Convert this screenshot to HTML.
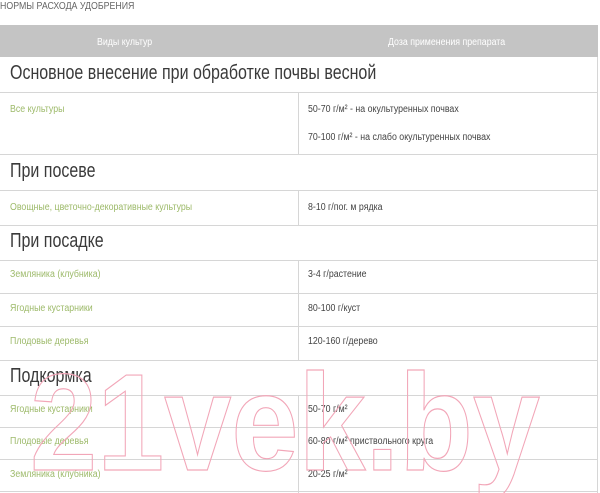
<!DOCTYPE html>
<html><head><meta charset="utf-8"><style>
*{margin:0;padding:0;box-sizing:border-box}
body{width:600px;height:493px;background:#fff;position:relative;overflow:hidden;font-family:"Liberation Sans",sans-serif}
.a{position:absolute;white-space:nowrap}
.t{display:inline-block;transform-origin:left center;transform:scaleX(.88)}
.sec .t{transform:scaleX(.8)}
.h{position:absolute;left:0;width:598px;height:1px;background:#d6d6d6}
.v{position:absolute;left:298px;width:1px;background:#d6d6d6}
.sec{font-size:20px;color:#3a3a3a;left:10px}
.g{font-size:10px;color:#9dba6a;left:10px}
.d{font-size:10px;color:#444;left:308px}
</style></head><body>
<div class="a" style="left:0;top:1px;font-size:10px;color:#666"><span class="t">НОРМЫ РАСХОДА УДОБРЕНИЯ</span></div>
<div style="position:absolute;left:0;top:25px;width:598px;height:32px;background:#c4c4c4"></div>
<div class="a" style="left:97px;top:37px;font-size:10px;color:#fff"><span class="t">Виды культур</span></div>
<div class="a" style="left:388px;top:37px;font-size:10px;color:#fff"><span class="t">Доза применения препарата</span></div>
<div style="position:absolute;left:597px;top:57px;width:1px;height:436px;background:#d6d6d6"></div>

<div class="a sec" style="top:62px"><span class="t">Основное внесение при обработке почвы весной</span></div>
<div class="h" style="top:92px"></div>
<div class="v" style="top:92px;height:62px"></div>
<div class="a g" style="top:104px"><span class="t">Все культуры</span></div>
<div class="a d" style="top:104px"><span class="t">50-70 г/м² - на окультуренных почвах</span></div>
<div class="a d" style="top:132px"><span class="t">70-100 г/м² - на слабо окультуренных почвах</span></div>
<div class="h" style="top:154px"></div>

<div class="a sec" style="top:160px"><span class="t">При посеве</span></div>
<div class="h" style="top:190px"></div>
<div class="v" style="top:190px;height:35px"></div>
<div class="a g" style="top:202px"><span class="t">Овощные, цветочно-декоративные культуры</span></div>
<div class="a d" style="top:202px"><span class="t">8-10 г/пог. м рядка</span></div>
<div class="h" style="top:225px"></div>

<div class="a sec" style="top:230px"><span class="t">При посадке</span></div>
<div class="h" style="top:260px"></div>
<div class="v" style="top:260px;height:100px"></div>
<div class="a g" style="top:269px"><span class="t">Земляника (клубника)</span></div>
<div class="a d" style="top:269px"><span class="t">3-4 г/растение</span></div>
<div class="h" style="top:293px"></div>
<div class="a g" style="top:303px"><span class="t">Ягодные кустарники</span></div>
<div class="a d" style="top:303px"><span class="t">80-100 г/куст</span></div>
<div class="h" style="top:326px"></div>
<div class="a g" style="top:336px"><span class="t">Плодовые деревья</span></div>
<div class="a d" style="top:336px"><span class="t">120-160 г/дерево</span></div>
<div class="h" style="top:360px"></div>

<div class="a sec" style="top:365px"><span class="t">Подкормка</span></div>
<div class="h" style="top:395px"></div>
<div class="v" style="top:395px;height:98px"></div>
<div class="a g" style="top:404px"><span class="t">Ягодные кустарники</span></div>
<div class="a d" style="top:404px"><span class="t">50-70 г/м²</span></div>
<div class="h" style="top:427px"></div>
<div class="a g" style="top:436px"><span class="t">Плодовые деревья</span></div>
<div class="a d" style="top:436px"><span class="t">60-80 г/м² приствольного круга</span></div>
<div class="h" style="top:459px"></div>
<div class="a g" style="top:469px"><span class="t">Земляника (клубника)</span></div>
<div class="a d" style="top:469px"><span class="t">20-25 г/м²</span></div>
<div class="h" style="top:491px"></div>

<svg style="position:absolute;left:0;top:0" width="600" height="493">
<text x="30" y="470" font-family="Liberation Sans" font-weight="bold" font-size="138" textLength="510" lengthAdjust="spacingAndGlyphs" fill="none" stroke="#f2a6b8" stroke-width="1.2">21vek.by</text>
</svg>
</body></html>
